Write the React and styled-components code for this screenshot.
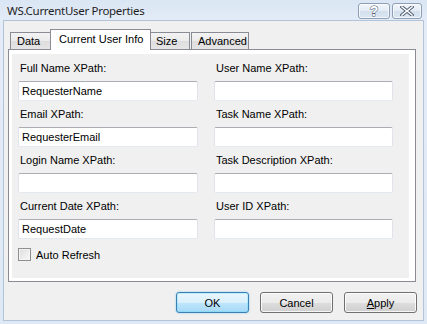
import styled, { createGlobalStyle, css } from "styled-components";

const Global = createGlobalStyle`
  html, body {
    margin: 0;
    padding: 0;
    background: #dbe6f3;
    overflow: hidden;
  }
  * { box-sizing: border-box; }
`;

const Frame = styled.div`
  width: 427px;
  height: 324px;
  display: flex;
  flex-direction: column;
  background: linear-gradient(to bottom, #dbe6f4 0px, #e3ecf7 22px, #dfe9f5 100%);
  padding: 0 3px 3px 3px;
  font-family: "Liberation Sans", Arial, sans-serif;
  font-size: 11px;
  color: #000;
`;

const TitleBar = styled.div`
  height: 21px;
  display: flex;
  align-items: flex-start;
  justify-content: space-between;
  padding: 0 2px 0 4px;
`;

const Title = styled.div`
  font-family: "Noto Sans", "Open Sans", sans-serif;
  font-size: 11.5px;
  color: #1e1e1e;
  padding-top: 3px;
  letter-spacing: -0.3px;
`;

const CaptionButtons = styled.div`
  display: flex;
  gap: 2px;
  padding-top: 3px;
`;

const CaptionButton = styled.div`
  width: ${(p) => p.$w}px;
  height: 16px;
  border: 1px solid #8d9fb6;
  border-radius: 3px;
  background: linear-gradient(to bottom, #f3f7fb 0%, #e3ebf5 50%, #d3dfed 51%, #dbe6f2 100%);
  box-shadow: inset 0 0 0 1px rgba(255, 255, 255, 0.7);
  display: flex;
  align-items: center;
  justify-content: center;
`;

const Client = styled.div`
  flex: 1;
  display: flex;
  flex-direction: column;
  background: #f0f0f0;
  border: 1px solid #b4c4d8;
  padding: 8px 5px 7px 4px;
`;

const TabRow = styled.div`
  height: 21px;
  display: flex;
  align-items: flex-end;
  padding-left: 2px;
  margin-bottom: -1px;
`;

const Tab = styled.div`
  position: relative;
  width: ${(p) => p.$w}px;
  height: 17px;
  margin-bottom: 1px;
  margin-right: ${(p) => p.$mr || 0}px;
  padding: 0 6px;
  display: flex;
  align-items: center;
  border: 1px solid #898c95;
  border-bottom: none;
  background: linear-gradient(to bottom, #f3f3f3 0%, #ebebeb 50%, #dedede 51%, #e5e5e5 100%);
  white-space: nowrap;
  ${(p) =>
    p.$active &&
    css`
      z-index: 1;
      height: 21px;
      margin: 0 -2px;
      padding: 0 8px 2px 8px;
      background: #fff;
    `}
`;

const Panel = styled.div`
  width: 408px;
  height: 233px;
  border: 1px solid #898c95;
  background: #fff;
  padding: 4px 6px 3px 3px;
`;

const Page = styled.div`
  height: 100%;
  background: #f0f0f0;
  padding: 8px 0 0 6px;
`;

const Grid = styled.div`
  display: grid;
  grid-template-columns: 180px 179px;
  column-gap: 16px;
`;

const Field = styled.div`
  display: flex;
  flex-direction: column;
  padding-bottom: 7px;
`;

const Label = styled.div`
  height: 13px;
  line-height: 13px;
  padding-left: 2px;
  margin-bottom: 6px;
  white-space: nowrap;
`;

const TextBox = styled.div`
  height: 20px;
  line-height: 18px;
  padding: 0 3px;
  background: #fff;
  border: 1px solid #e2e3ea;
  border-top-color: #abadb3;
  border-bottom-color: #e3e9ef;
  border-radius: 2px;
  white-space: nowrap;
`;

const CheckRow = styled.div`
  display: flex;
  align-items: center;
  gap: 5px;
  margin-top: 2px;
  height: 13px;
`;

const CheckBox = styled.div`
  width: 13px;
  height: 13px;
  border: 1px solid #8e8f8f;
  background: linear-gradient(135deg, #dcdcdc 0%, #f1f1f1 70%, #fafafa 100%);
  box-shadow: inset 0 0 0 1px #f4f4f4;
`;

const ButtonRow = styled.div`
  display: flex;
  justify-content: flex-end;
  gap: 11px;
  margin-top: 10px;
  padding-right: 1px;
`;

const Button = styled.div`
  width: 73px;
  height: 21px;
  border: 1px solid #707070;
  border-radius: 3px;
  display: flex;
  align-items: center;
  justify-content: center;
  background: linear-gradient(to bottom, #f2f2f2 0%, #ebebeb 50%, #dddddd 51%, #cfcfcf 100%);
  box-shadow: inset 0 0 0 1px rgba(255, 255, 255, 0.8);
  ${(p) =>
    p.$default &&
    css`
      border-color: #3c7fb1;
      background: linear-gradient(to bottom, #eaf6fd 0%, #d9f0fc 50%, #bee6fd 51%, #a7d9f5 100%);
      box-shadow: inset 0 0 0 1px #48d6fb44, 0 0 2px #7fc9f5;
    `}
  u { text-decoration: underline; }
`;

const fields = [
  ["Full Name XPath:", "RequesterName", "User Name XPath:", ""],
  ["Email XPath:", "RequesterEmail", "Task Name XPath:", ""],
  ["Login Name XPath:", "", "Task Description XPath:", ""],
  ["Current Date XPath:", "RequestDate", "User ID XPath:", ""],
];

export default function App() {
  return (
    <Frame>
      <Global />
      <TitleBar>
        <Title>WS.CurrentUser Properties</Title>
        <CaptionButtons>
          <CaptionButton $w={32}>
            <svg width="12" height="14" viewBox="0 0 12 14">
              <text
                x="6"
                y="12"
                textAnchor="middle"
                fontFamily="Liberation Sans, sans-serif"
                fontWeight="bold"
                fontSize="14"
                fill="#fff"
                stroke="#4b5a6e"
                strokeWidth="1"
                paintOrder="stroke"
              >
                ?
              </text>
            </svg>
          </CaptionButton>
          <CaptionButton $w={30}>
            <svg width="14" height="10" viewBox="0 0 14 10">
              <path
                d="M2 1 L12 9 M12 1 L2 9"
                stroke="#4b5a6e"
                strokeWidth="3.4"
                strokeLinecap="square"
              />
              <path
                d="M2 1 L12 9 M12 1 L2 9"
                stroke="#fff"
                strokeWidth="1.6"
                strokeLinecap="square"
              />
            </svg>
          </CaptionButton>
        </CaptionButtons>
      </TitleBar>
      <Client>
        <TabRow>
          <Tab $w={42}>Data</Tab>
          <Tab $w={101} $active>
            Current User Info
          </Tab>
          <Tab $w={41} $mr={1}>
            Size
          </Tab>
          <Tab $w={58}>Advanced</Tab>
        </TabRow>
        <Panel>
          <Page>
            <Grid>
              {fields.map(([l1, v1, l2, v2]) => [
                <Field key={l1}>
                  <Label>{l1}</Label>
                  <TextBox>{v1}</TextBox>
                </Field>,
                <Field key={l2}>
                  <Label>{l2}</Label>
                  <TextBox>{v2}</TextBox>
                </Field>,
              ])}
            </Grid>
            <CheckRow>
              <CheckBox />
              Auto Refresh
            </CheckRow>
          </Page>
        </Panel>
        <ButtonRow>
          <Button $default>OK</Button>
          <Button>Cancel</Button>
          <Button>
            <span>
              <u>A</u>pply
            </span>
          </Button>
        </ButtonRow>
      </Client>
    </Frame>
  );
}
